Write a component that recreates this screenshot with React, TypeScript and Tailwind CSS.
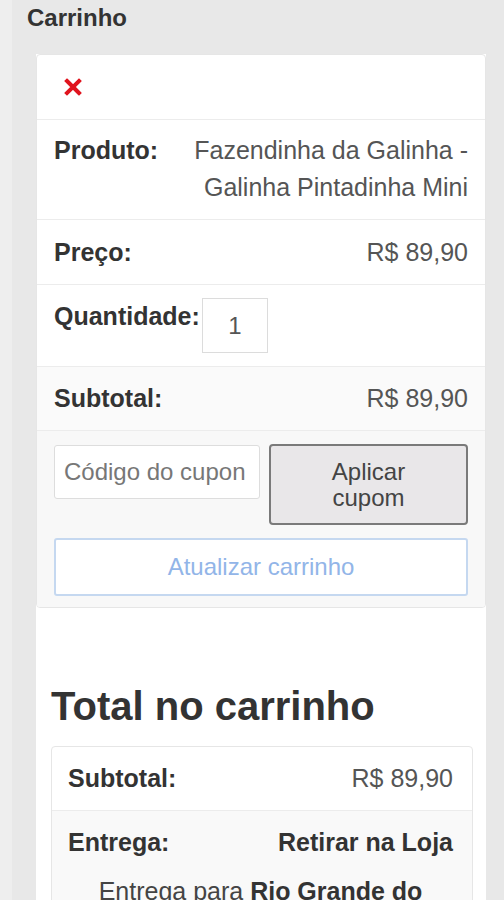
import React from 'react';

const RemoveIcon: React.FC = () => (
  <svg width="18" height="18" viewBox="0 0 18 18" aria-hidden="true">
    <path d="M3 3 L15 15 M15 3 L3 15" stroke="#e0141e" strokeWidth="4" strokeLinecap="square" />
  </svg>
);

const App: React.FC = () => {
  return (
    <div className="min-h-screen bg-[#e8e8e8] border-l-[12px] border-l-[#eeeeee] font-['Liberation_Sans',Arial,sans-serif] text-[25px] text-[#333]">
      {/* Page title */}
      <h2 className="pl-[15px] pt-[4px] h-[54px] font-bold text-[24px] leading-[28px] text-[#333]">Carrinho</h2>

      <div className="ml-[24px] mr-[18px] bg-white pb-[40px]">
        {/* Cart table */}
        <div className="border border-[#e6e6e6] rounded-[4px] overflow-hidden">
          <div className="h-[64px] flex items-center pl-[27px]">
            <RemoveIcon />
          </div>

          <div className="h-[100px] border-t border-[#ececec] flex justify-between pl-[17px] pr-[17px] pt-[12px] leading-[37px]">
            <span className="font-bold">Produto:</span>
            <span className="text-right text-[#555] w-[280px]">Fazendinha da Galinha - Galinha Pintadinha Mini</span>
          </div>

          <div className="h-[65px] border-t border-[#ececec] flex items-center justify-between px-[17px] leading-[37px]">
            <span className="font-bold">Preço:</span>
            <span className="text-[#555]">R$ 89,90</span>
          </div>

          <div className="h-[82px] border-t border-[#ececec] flex items-start px-[17px] pt-[13px] leading-[37px]">
            <span className="font-bold">Quantidade:</span>
            <div className="ml-[2px] w-[66px] h-[55px] border border-[#dcdcdc] flex items-center justify-center text-[#555] text-[24px]">
              1
            </div>
          </div>

          <div className="h-[64px] border-t border-[#ececec] bg-[#fafafa] flex items-center justify-between px-[17px] leading-[37px]">
            <span className="font-bold">Subtotal:</span>
            <span className="text-[#555]">R$ 89,90</span>
          </div>

          {/* Coupon / actions */}
          <div className="border-t border-[#ececec] bg-[#f8f8f8] px-[17px] pt-[13px] pb-[11px]">
            <div className="flex items-start gap-[9px]">
              <div className="w-[206px] h-[54px] mt-[1px] bg-white border border-[#dddddd] rounded-[3px] flex items-center pl-[9px] text-[#777] text-[24px] whitespace-nowrap overflow-hidden">
                Código do cupon
              </div>
              <button className="flex-1 h-[81px] bg-[#e9e7e9] border-2 border-[#7a7a7a] rounded-[4px] text-[#444] text-[24px] leading-[26px]">
                Aplicar
                <br />
                cupom
              </button>
            </div>
            <button className="mt-[13px] w-full h-[58px] bg-white border-2 border-[#c5d8f0] rounded-[3px] text-[#92b5e8] text-[24px]">
              Atualizar carrinho
            </button>
          </div>
        </div>

        {/* Cart totals */}
        <div className="pl-[15px] pr-[13px]">
          <h2 className="pt-[75px] font-bold text-[40px] leading-[46px] text-[#333]">Total no carrinho</h2>

          <div className="mt-[17px] border border-[#e6e6e6] rounded-[4px] overflow-hidden">
            <div className="h-[63px] flex items-center justify-between pl-[16px] pr-[19px] leading-[37px]">
              <span className="font-bold">Subtotal:</span>
              <span className="text-[#555]">R$ 89,90</span>
            </div>
            <div className="border-t border-[#ececec] bg-[#f9f9f9] pl-[16px] pr-[19px] pt-[13px] pb-[20px]">
              <div className="flex justify-between leading-[37px]">
                <span className="font-bold">Entrega:</span>
                <span className="font-bold">Retirar na Loja</span>
              </div>
              <p className="mt-[12px] px-[18px] text-center text-[#444] leading-[37px]">
                Entrega para <strong className="text-[#333]">Rio Grande do Sul</strong>.
              </p>
            </div>
          </div>
        </div>
      </div>
    </div>
  );
};

export default App;
